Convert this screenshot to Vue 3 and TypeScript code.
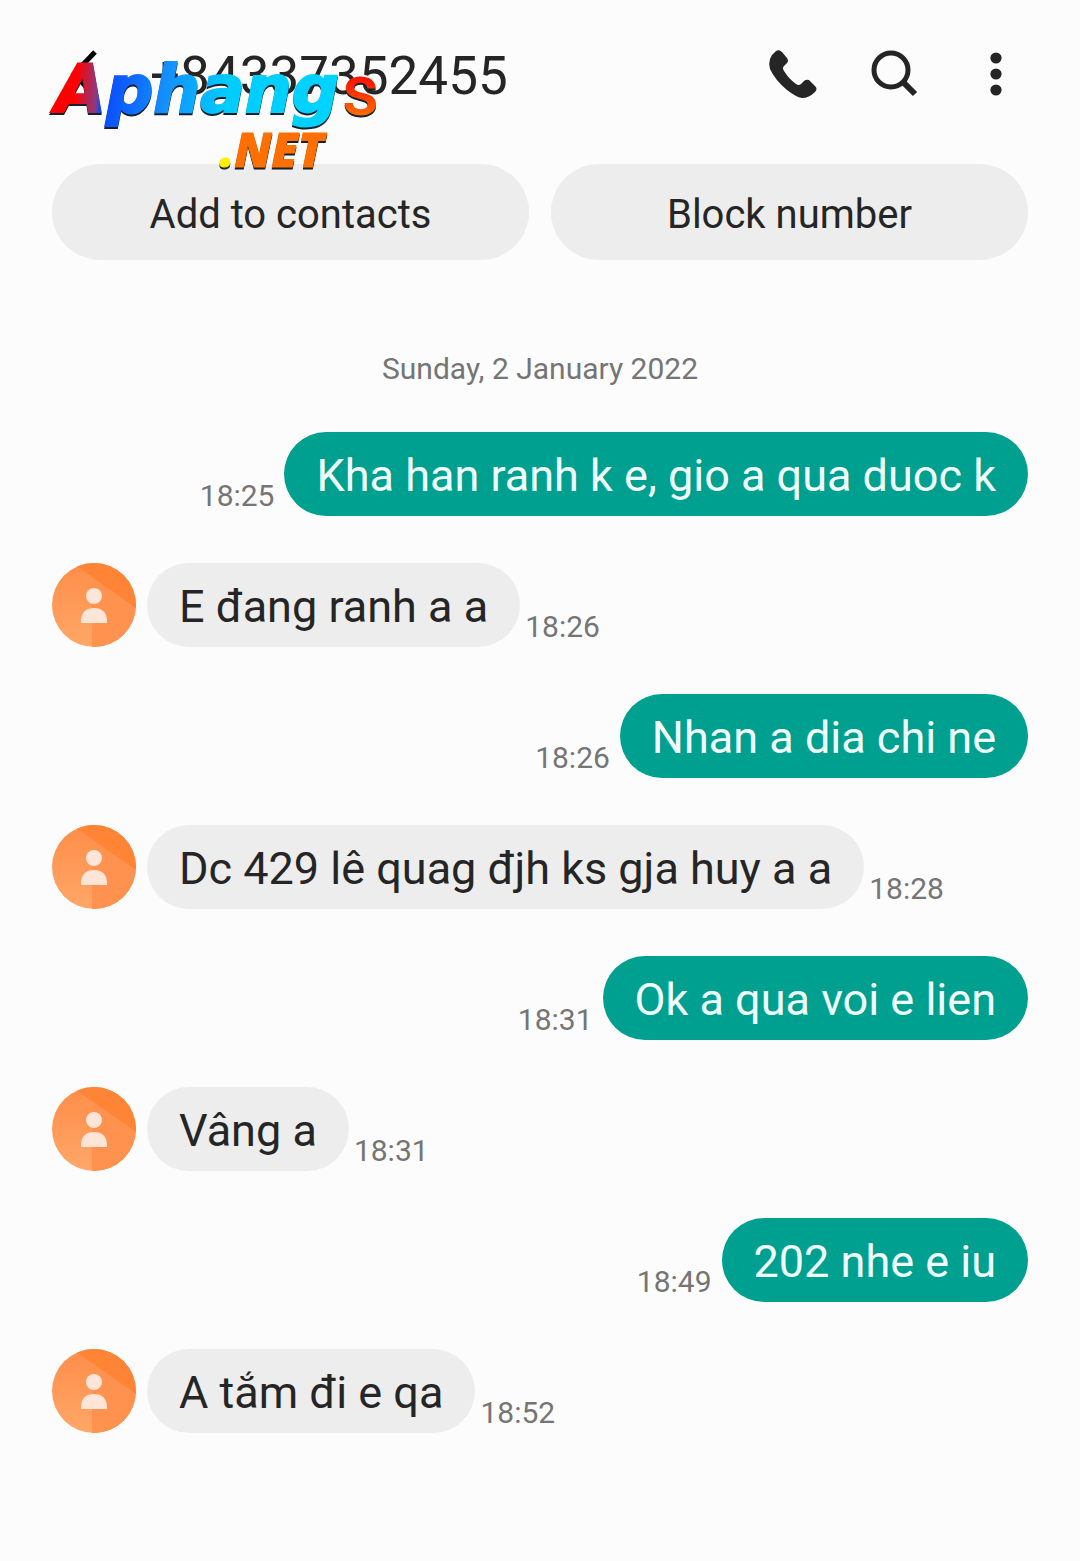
<script setup lang="ts">
interface Message {
  id: number
  text: string
  time: string
  sent: boolean
}

const phone = '+84337352455'

const messages: Message[] = [
  { id: 1, text: 'Kha han ranh k e, gio a qua duoc k', time: '18:25', sent: true },
  { id: 2, text: 'E đang ranh a a', time: '18:26', sent: false },
  { id: 3, text: 'Nhan a dia chi ne', time: '18:26', sent: true },
  { id: 4, text: 'Dc 429 lê quag đjh ks gja huy a a', time: '18:28', sent: false },
  { id: 5, text: 'Ok a qua voi e lien', time: '18:31', sent: true },
  { id: 6, text: 'Vâng a', time: '18:31', sent: false },
  { id: 7, text: '202 nhe e iu', time: '18:49', sent: true },
  { id: 8, text: 'A tắm đi e qa', time: '18:52', sent: false },
]
</script>

<template>
  <div class="screen">
    <header class="bar">
      <button class="icon back" type="button" aria-label="Back">
        <svg width="48" height="56" viewBox="0 0 48 56" fill="none" stroke="#000" stroke-width="5">
          <path d="M43 6 22 28 43 50" />
        </svg>
      </button>
      <h1 class="phone">{{ phone }}</h1>
      <div class="tools">
        <button class="icon" type="button" aria-label="Call">
          <svg width="52" height="52" viewBox="0 0 52 52" fill="#252525">
            <path d="M10 3Q13 1 16 4L21 10Q23 13 21 15L18 18Q16 20 18 23Q23 31 30 36Q33 38 35 36L38 33Q40 31 43 32L49 38Q52 41 49 44Q43 50 36 50Q30 49 21 42Q9 32 4 21Q1 10 10 3Z" />
          </svg>
        </button>
        <button class="icon" type="button" aria-label="Search">
          <svg width="52" height="52" viewBox="0 0 52 52" fill="none" stroke="#252525">
            <circle cx="23" cy="22" r="17" stroke-width="5" />
            <path d="M35 34 47 46" stroke-width="6" />
          </svg>
        </button>
        <button class="icon" type="button" aria-label="More options">
          <svg width="52" height="52" viewBox="0 0 52 52" fill="#252525">
            <circle cx="26" cy="10" r="5.6" />
            <circle cx="26" cy="26" r="5.6" />
            <circle cx="26" cy="42" r="5.6" />
          </svg>
        </button>
      </div>
    </header>

    <svg class="logo" width="340" height="140" viewBox="0 0 340 140" role="img" aria-label="Aphangs.NET">
      <defs>
        <linearGradient id="word" gradientUnits="userSpaceOnUse" x1="0" y1="40" x2="300" y2="70">
          <stop offset="0.12" stop-color="#ff0000" />
          <stop offset="0.19" stop-color="#8b3a80" />
          <stop offset="0.21" stop-color="#0a48ff" />
          <stop offset="0.42" stop-color="#1490ff" />
          <stop offset="0.62" stop-color="#00ccff" />
          <stop offset="1" stop-color="#00d4ff" />
        </linearGradient>
        <linearGradient id="tail" x1="0" y1="0" x2="0" y2="1">
          <stop offset="0.4" stop-color="#ff1800" />
          <stop offset="0.85" stop-color="#ff7800" />
        </linearGradient>
      </defs>
      <g class="shade">
        <text class="word" x="15" y="72" fill="url(#word)" stroke="url(#word)" stroke-width="2">Aphang</text>
        <text class="tail" x="302" y="75" fill="url(#tail)">s</text>
        <text class="net" x="180" y="127" fill="#ff7000" stroke="#ff7000" stroke-width="1"><tspan fill="#fff000" stroke="#fff000">.</tspan>NET</text>
      </g>
    </svg>

    <div class="actions">
      <button class="pill" type="button">Add to contacts</button>
      <button class="pill" type="button">Block number</button>
    </div>

    <main>
      <p class="date">Sunday, 2 January 2022</p>
      <ul class="thread">
        <li v-for="m in messages" :key="m.id" class="row" :class="{ sent: m.sent }">
          <svg v-if="!m.sent" class="avatar" width="84" height="84" viewBox="0 0 84 84" aria-hidden="true">
            <defs>
              <linearGradient :id="`glow-${m.id}`" x1="0" y1="0" x2="0" y2="1">
                <stop offset="0" stop-color="#ff8d49" />
                <stop offset="1" stop-color="#ffa768" />
              </linearGradient>
            </defs>
            <path d="M0 0H84V84H0Z" :fill="`url(#glow-${m.id})`" />
            <path d="M40 42L84 42V84H40Z" fill="#ff924e" />
            <path d="M40 14 84 45H40Z" fill="#ff924e" />
            <path d="M20 0H84V45Z" fill="#ff8435" />
            <circle cx="42" cy="33" r="8" fill="#ffe5d7" />
            <path d="M29 60V57Q30 45 42 45T55 57V60Z" fill="#ffe5d7" />
          </svg>
          <p class="bubble">{{ m.text }}</p>
          <time class="time">{{ m.time }}</time>
        </li>
      </ul>
    </main>
  </div>
</template>

<style>
body {
  margin: 0;
  background: #fcfcfc;
}
</style>

<style scoped>
.screen {
  position: relative;
  box-sizing: border-box;
  min-height: 100vh;
  padding: 44px 52px 128px;
  background: #fcfcfc;
  color: #252525;
  font-family: Roboto, "Noto Sans", sans-serif;
}

.bar {
  display: flex;
  align-items: center;
  height: 60px;
}

.icon {
  display: flex;
  padding: 0;
  border: 0;
  background: none;
}

.phone {
  margin: 0 0 0 50px;
  padding-top: 4px;
  font-size: 53px;
  line-height: 60px;
  font-weight: 400;
}

.tools {
  display: flex;
  gap: 50px;
  margin-left: auto;
  margin-right: 6px;
}

.logo {
  position: absolute;
  top: 40px;
  left: 40px;
  pointer-events: none;
}

.shade {
  filter: drop-shadow(0 2px 0 #14202c);
}

.word {
  font: italic 700 66px "DejaVu Sans", sans-serif;
}

.tail {
  font: 500 72px Roboto, sans-serif;
}

.net {
  font: italic 800 47px "Open Sans", sans-serif;
}

.actions {
  display: flex;
  gap: 22px;
  margin-top: 60px;
}

.pill {
  flex: 1;
  height: 96px;
  padding: 4px 0 0;
  border: 0;
  border-radius: 48px;
  background: #ededed;
  color: #252525;
  font-family: inherit;
  font-size: 40px;
}

.date {
  margin: 91px 0 0;
  color: #757575;
  font-size: 30px;
  line-height: 36px;
  text-align: center;
}

.thread {
  display: flex;
  flex-direction: column;
  gap: 47px;
  margin: 45px 0 0;
  padding: 0;
  list-style: none;
}

.row {
  display: flex;
  align-items: flex-end;
}

.sent {
  flex-direction: row-reverse;
}

.avatar {
  flex: none;
  margin-right: 11px;
  border-radius: 50%;
}

.bubble {
  margin: 0;
  padding: 16px 32px 12px;
  border-radius: 42px;
  background: #ededed;
  font-size: 45px;
  line-height: 56px;
}

.sent .bubble {
  background: #00a090;
  color: #f0fffc;
}

.time {
  margin: 0 10px 2px 5px;
  color: #757575;
  font-size: 30px;
  line-height: 36px;
}
</style>
